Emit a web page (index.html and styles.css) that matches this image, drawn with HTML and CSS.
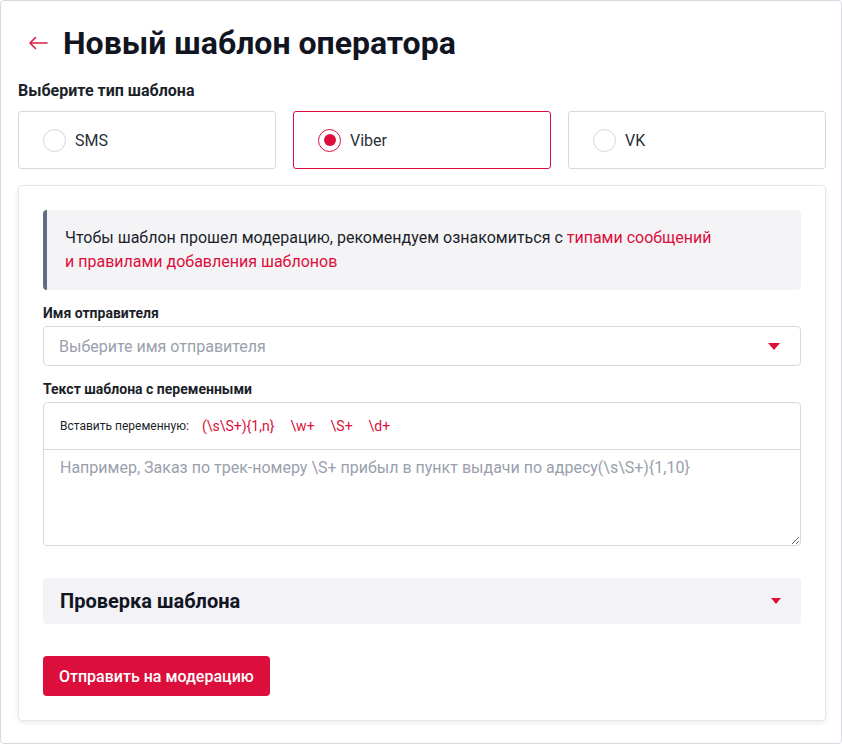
FILE: index.html
```html
<!DOCTYPE html>
<html lang="ru">
<head>
<meta charset="utf-8">
<title>Новый шаблон оператора</title>
<link rel="stylesheet" href="styles.css">
</head>
<body>
<div class="page">
  <div class="header">
    <a class="back" href="#" aria-label="Назад">
      <svg width="20" height="14" viewBox="0 0 20 14"><path d="M19 7H2M7.5 1.5L2 7l5.5 5.5" fill="none" stroke="#dc1a44" stroke-width="1.6" stroke-linecap="round" stroke-linejoin="round"/></svg>
    </a>
    <h1 class="title">Новый шаблон оператора</h1>
  </div>

  <div class="section-label">Выберите тип шаблона</div>
  <div class="types">
    <label class="type"><span class="radio"></span><span>SMS</span></label>
    <label class="type type-active"><span class="radio radio-on"></span><span>Viber</span></label>
    <label class="type"><span class="radio"></span><span>VK</span></label>
  </div>

  <div class="card">
    <div class="notice">
      Чтобы шаблон прошел модерацию, рекомендуем ознакомиться с <a href="#" class="link">типами сообщений</a><br>
      <a href="#" class="link">и правилами добавления шаблонов</a>
    </div>

    <div class="field-label">Имя отправителя</div>
    <div class="select">
      <span class="placeholder">Выберите имя отправителя</span>
      <span class="caret"></span>
    </div>

    <div class="field-label">Текст шаблона с переменными</div>
    <div class="editor">
      <div class="toolbar">
        <span class="toolbar-label">Вставить переменную:</span>
        <span class="var">(\s\S+){1,n}</span>
        <span class="var">\w+</span>
        <span class="var">\S+</span>
        <span class="var">\d+</span>
      </div>
      <textarea class="textarea" placeholder="Например, Заказ по трек-номеру \S+ прибыл в пункт выдачи по адресу(\s\S+){1,10}"></textarea>
    </div>

    <div class="check">
      <span class="check-title">Проверка шаблона</span>
      <span class="caret caret-sm"></span>
    </div>

    <button class="submit">Отправить на модерацию</button>
  </div>
</div>
</body>
</html>
```

FILE: styles.css
```css
* { box-sizing: border-box; }

html, body {
  margin: 0;
  padding: 0;
  background: #ffffff;
}

body {
  font-family: Roboto, "Noto Sans", Arial, sans-serif;
  color: #1b1f2a;
}

.page {
  height: 744px;
  border: 1px solid #d6d8e0;
  border-radius: 4px;
  padding: 22px 15px 0 17px;
}

.header {
  display: flex;
  align-items: center;
  height: 40px;
}

.back {
  display: flex;
  width: 20px;
  height: 14px;
  margin-left: 10px;
  margin-right: 15px;
}

.title {
  margin: 0;
  font-size: 32px;
  font-weight: 700;
  line-height: 40px;
  color: #11151f;
  letter-spacing: 0;
}

.section-label {
  margin-top: 18px;
  font-size: 16px;
  font-weight: 700;
  line-height: 20px;
  color: #1b1f2a;
}

.types {
  margin-top: 10px;
  display: grid;
  grid-template-columns: repeat(3, 1fr);
  gap: 17px;
}

.type {
  height: 58px;
  display: flex;
  align-items: center;
  gap: 9px;
  padding-left: 24px;
  border: 1px solid #d6d8e0;
  border-radius: 3px;
  font-size: 16px;
  color: #2a2e38;
  cursor: pointer;
}

.type-active {
  border-color: #dc0f3c;
}

.radio {
  width: 23px;
  height: 23px;
  border-radius: 50%;
  border: 1px solid #d3d5de;
  display: flex;
  align-items: center;
  justify-content: center;
}

.radio-on {
  border: 1.5px solid #dc0f3c;
}

.radio-on::after {
  content: "";
  width: 12px;
  height: 12px;
  border-radius: 50%;
  background: #dc0f3c;
}

.card {
  margin-top: 16px;
  border: 1px solid #e4e5eb;
  border-radius: 4px;
  box-shadow: 0 2px 5px rgba(20, 24, 40, 0.08);
  padding: 24px;
}

.notice {
  background: #f4f4f7;
  border-left: 4px solid #646c80;
  border-radius: 4px;
  padding: 16px 18px;
  font-size: 16px;
  line-height: 24px;
  color: #1b1f2a;
}

.link {
  color: #dc0f3c;
  text-decoration: none;
}

.field-label {
  margin-top: 13px;
  margin-bottom: 3px;
  font-size: 14px;
  font-weight: 700;
  line-height: 20px;
  color: #1b1f2a;
}

.select {
  height: 40px;
  border: 1px solid #d6d8e0;
  border-radius: 4px;
  display: flex;
  align-items: center;
  justify-content: space-between;
  padding: 0 20px 0 15px;
}

.placeholder {
  font-size: 16px;
  color: #9a9fae;
}

.caret {
  width: 0;
  height: 0;
  border-left: 6px solid transparent;
  border-right: 6px solid transparent;
  border-top: 7px solid #dc0f3c;
}

.caret-sm {
  border-left-width: 5px;
  border-right-width: 5px;
  border-top-width: 6px;
}

.editor {
  border: 1px solid #d6d8e0;
  border-radius: 4px;
  display: flex;
  flex-direction: column;
}

.toolbar {
  height: 47px;
  border-bottom: 1px solid #d6d8e0;
  display: flex;
  align-items: center;
  padding: 0 16px;
  gap: 16px;
}

.toolbar-label {
  font-size: 12px;
  color: #1b1f2a;
  margin-right: -3px;
}

.var {
  font-size: 14px;
  color: #dc0f3c;
}

.textarea {
  display: block;
  width: 100%;
  height: 95px;
  border: 0;
  border-radius: 0 0 4px 4px;
  padding: 8px 16px;
  font-family: Roboto, "Noto Sans", Arial, sans-serif;
  font-size: 16px;
  line-height: 20px;
  color: #1b1f2a;
  background: transparent;
  outline: none;
}

.textarea::placeholder {
  color: #9a9fae;
}

.check {
  margin-top: 32px;
  height: 46px;
  background: #f2f2f7;
  border-radius: 4px;
  display: flex;
  align-items: center;
  justify-content: space-between;
  padding: 0 20px 0 17px;
}

.check-title {
  font-size: 20px;
  font-weight: 700;
  color: #11151f;
}

.submit {
  margin-top: 32px;
  height: 40px;
  padding: 0 16px;
  border: 0;
  border-radius: 4px;
  background: #dc0f3c;
  color: #ffffff;
  font-family: Roboto, "Noto Sans", Arial, sans-serif;
  font-size: 16px;
  font-weight: 500;
  cursor: pointer;
}
```
